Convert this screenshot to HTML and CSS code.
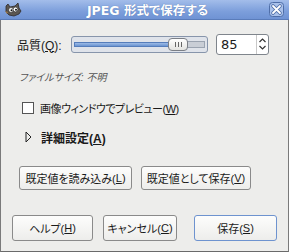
FILE: index.html
```html
<!DOCTYPE html>
<html lang="ja">
<head>
<meta charset="utf-8">
<link rel="stylesheet" href="styles.css">
</head>
<body>
<div class="window">
  <div class="titlebar">
    <svg class="app-icon" width="18" height="14" viewBox="0 0 18 14">
      <path d="M2 3 L4 1 L6 4 L11 3 L14 0 L15 5 L17 8 L15 11 L10 13 L5 12 L2 9 Z" fill="#5b5651" stroke="#2e2b29" stroke-width="0.8"/>
      <circle cx="7" cy="7" r="2.4" fill="#fff" stroke="#222" stroke-width="0.6"/>
      <circle cx="11.5" cy="6.5" r="2.4" fill="#fff" stroke="#222" stroke-width="0.6"/>
      <circle cx="7.5" cy="7.3" r="1" fill="#111"/>
      <circle cx="12" cy="6.8" r="1" fill="#111"/>
      <path d="M1 8 L4 9 L3 11 Z" fill="#a07a4a"/>
    </svg>
    <div class="title">JPEG 形式で保存する</div>
    <div class="close">
      <svg width="15" height="15" viewBox="0 0 15 15">
        <rect x="0.5" y="0.5" width="14" height="14" rx="3" fill="#a9c1ea" stroke="#4f6ea8"/>
        <path d="M4 4 L11 11 M11 4 L4 11" stroke="#4f6ea8" stroke-width="3.6" stroke-linecap="round"/>
        <path d="M4 4 L11 11 M11 4 L4 11" stroke="#fff" stroke-width="1.8" stroke-linecap="round"/>
      </svg>
    </div>
  </div>
  <div class="content">
    <div class="quality-row">
      <span class="label">品質(<u>Q</u>):</span>
      <div class="trough">
        <div class="fill"></div>
        <div class="thumb"><i></i><i></i><i></i></div>
      </div>
      <div class="spin">
        <span class="spin-value">85</span>
        <div class="spin-arrows">
          <svg width="9" height="18" viewBox="0 0 9 18">
            <path d="M1.5 7 L4.5 4 L7.5 7" fill="none" stroke="#333" stroke-width="1.2"/>
            <path d="M1.5 11 L4.5 14 L7.5 11" fill="none" stroke="#333" stroke-width="1.2"/>
          </svg>
        </div>
      </div>
    </div>
    <div class="filesize">ファイルサイズ: 不明</div>
    <div class="check-row">
      <span class="checkbox"></span>
      <span class="check-label">画像ウィンドウでプレビュー(<u>W</u>)</span>
    </div>
    <div class="expander-row">
      <svg class="triangle" width="7" height="12" viewBox="0 0 7 12">
        <path d="M1 1 L6 6 L1 11 Z" fill="none" stroke="#222" stroke-width="1"/>
      </svg>
      <span class="bold">詳細設定(<u>A</u>)</span>
    </div>
    <div class="default-row">
      <button class="btn btn-default btn-load">既定値を読み込み(<u>L</u>)</button>
      <button class="btn btn-default btn-store">既定値として保存(<u>V</u>)</button>
    </div>
  </div>
  <div class="actions">
    <button class="btn btn-action">ヘルプ(<u>H</u>)</button>
    <button class="btn btn-action btn-cancel">キャンセル(<u>C</u>)</button>
    <button class="btn btn-action btn-focus">保存(<u>S</u>)</button>
  </div>
</div>
</body>
</html>
```
FILE: styles.css
```css
* { box-sizing: border-box; }
html, body { margin: 0; padding: 0; }
body {
  font-family: "Liberation Sans", "Noto Sans CJK JP", sans-serif;
  font-size: 11px;
  font-feature-settings: "palt";
  color: #1a1a1a;
  background: #ededeb;
}
.window {
  width: 289px;
  height: 252px;
  display: flex;
  flex-direction: column;
  background: #ededeb;
  border-left: 1px solid #7a7a7a;
  border-right: 1px solid #7a7a7a;
  border-bottom: 1px solid #6a6a6a;
}
.titlebar {
  height: 20px;
  margin: 0 -1px;
  display: flex;
  align-items: center;
  padding: 0 5px 0 4px;
  background: linear-gradient(#a3bdea, #7c9edb 60%, #6f93d4);
  border-bottom: 1px solid #5a7cba;
}
.app-icon { flex: none; }
.title {
  flex: 1;
  text-align: center;
  color: #fff;
  font-family: "DejaVu Sans", "Noto Sans CJK JP", sans-serif;
  font-size: 12.5px;
  font-weight: bold;
  text-shadow: 0 0 1px #5070a8;
  padding-left: 4px;
  white-space: nowrap;
}
.close { flex: none; width: 15px; height: 15px; display: flex; }
.content {
  flex: 1;
  display: flex;
  flex-direction: column;
  padding: 14px 0 0 16px;
}
.quality-row {
  display: flex;
  align-items: center;
  height: 20px;
}
.label { width: 54px; flex: none; white-space: nowrap; font-size: 12px; }
u { text-decoration: underline; text-underline-offset: 1px; }
.trough {
  position: relative;
  width: 137px;
  height: 17px;
  border: 1px solid #8795ab;
  border-radius: 3px;
  background: #dfe3ea;
  display: flex;
  align-items: center;
  padding: 0 2px;
}
.fill {
  width: 96px;
  height: 5px;
  background: linear-gradient(#9dbbe6, #6a94d2);
  border: 1px solid #557dbb;
}
.trough::after {
  content: "";
  flex: 1;
  height: 5px;
  background: #c9ced6;
  border: 1px solid #9aa3b0;
}
.thumb {
  position: absolute;
  left: 96px;
  top: 1px;
  width: 20px;
  height: 13px;
  border: 1px solid #7b7f86;
  border-radius: 4px;
  background: linear-gradient(#ffffff, #e3e3e0);
  display: flex;
  justify-content: center;
  align-items: center;
  gap: 2px;
}
.thumb i {
  display: block;
  width: 1px;
  height: 5px;
  background: #666;
}
.spin {
  margin-left: 8px;
  width: 53px;
  height: 21px;
  border: 1px solid #7f858c;
  border-radius: 3px;
  background: #fff;
  display: flex;
  align-items: center;
}
.spin-value {
  flex: 1;
  padding-left: 4px;
  font-family: "DejaVu Sans", sans-serif;
  font-size: 13px;
}
.spin-arrows {
  width: 12px;
  height: 100%;
  border-left: 1px solid #c8c8c8;
  display: flex;
  align-items: center;
  justify-content: center;
}
.filesize {
  margin-top: 17px;
  margin-left: 2px;
  color: #555;
  font-size: 10px;
  font-style: italic;
  height: 14px;
  line-height: 14px;
}
.check-row {
  margin-top: 15px;
  margin-left: 5px;
  display: flex;
  align-items: center;
  gap: 6px;
  height: 16px;
  white-space: nowrap;
}
.check-label { letter-spacing: -0.5px; }
.checkbox {
  width: 12px;
  height: 12px;
  border: 1px solid #555;
  background: #fff;
}
.expander-row {
  margin-top: 13px;
  margin-left: 8px;
  display: flex;
  align-items: center;
  gap: 9px;
  height: 16px;
}
.bold { font-weight: bold; font-size: 12px; }
.default-row {
  margin-top: 21px;
  margin-left: 2px;
  display: flex;
  gap: 9px;
}
.btn {
  font-family: "Liberation Sans", "Noto Sans CJK JP", sans-serif;
  font-size: 11px;
  font-feature-settings: "palt";
  color: #1a1a1a;
  white-space: nowrap;
  border: 1px solid #8a8a8a;
  border-radius: 3px;
  background: linear-gradient(#fdfdfc, #ededeb);
  padding: 0;
  display: flex;
  align-items: center;
  justify-content: center;
}
.btn-default { height: 24px; padding: 0 2px; }
.btn-load { width: 113px; }
.btn-store { width: 110px; }
.actions {
  display: flex;
  padding: 0 0 10px 11px;
  gap: 10px;
}
.btn-action { height: 26px; width: 81px; }
.btn-cancel { width: 74px; }
.btn-focus { margin-left: 7px; width: 83px; border-color: #6e93cf; }
```
